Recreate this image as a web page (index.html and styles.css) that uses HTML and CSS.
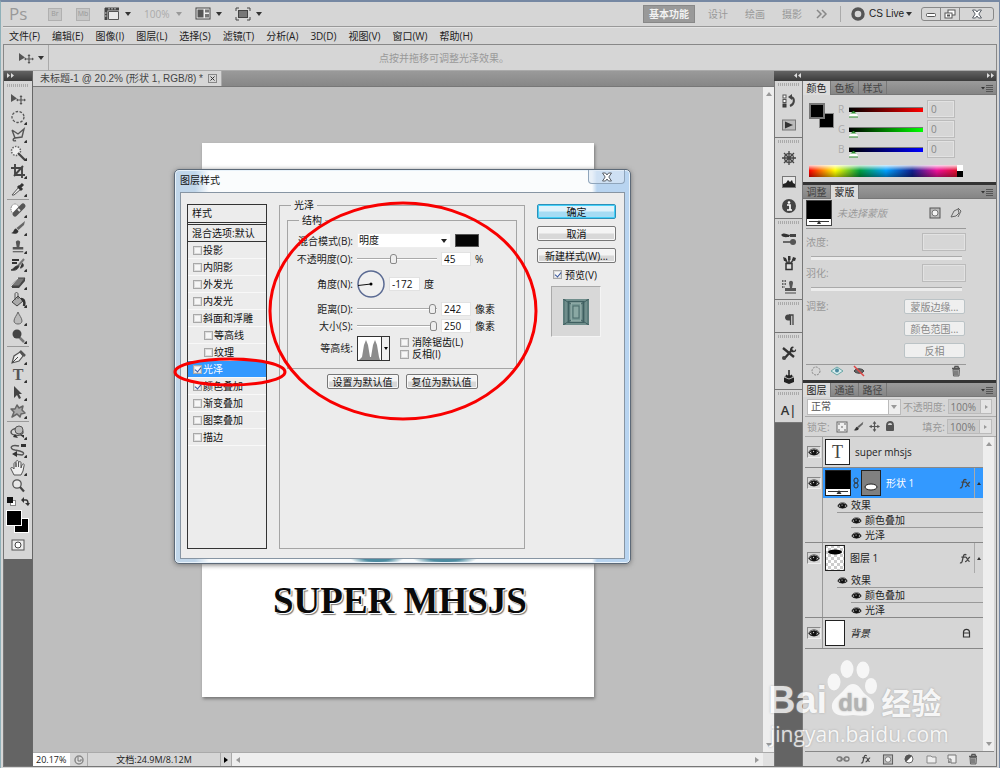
FILE: index.html
```html
<!DOCTYPE html>
<html lang="zh-CN">
<head>
<meta charset="utf-8">
<title>未标题-1 - Photoshop</title>
<link rel="stylesheet" href="styles.css">
</head>
<body>
<svg class="defs" aria-hidden="true">
  <symbol id="eye" viewBox="0 0 12 10"><path d="M1 5.500C3 2.500 9 2.500 11 5.500C9 8.500 3 8.500 1 5.500Z" fill="#eee" stroke="#222" stroke-width="1.300"/><circle cx="6" cy="5.300" r="2.800" fill="#111"/><path d="M1 4.500C3 1 9 1 11 4.500" fill="none" stroke="#555"/><circle cx="5.500" cy="4.500" r=".7" fill="#ccc"/></symbol>
  <symbol id="trash" viewBox="0 0 12 12"><path d="M2 3.500H10M4.500 3L5 1.500H8L8.500 3" fill="none" stroke="#555" stroke-width="1.300"/><path d="M3 4.500H9.500L9 11H3.500Z" fill="#aaa" stroke="#666"/><path d="M5 5.500V10M7 5.500V10" stroke="#555"/></symbol>
  <symbol id="mask" viewBox="0 0 12 12"><rect x="1" y="1" width="10" height="10" fill="#bbb" stroke="#555"/><circle cx="6" cy="6" r="3" fill="#f4f4f4" stroke="#777"/></symbol>
  <symbol id="menu" viewBox="0 0 12 8"><path d="M0 3H4L2 5.500Z" fill="#333"/><path d="M5 1.500H12M5 3.500H12M5 5.500H12M5 7.500H12" stroke="#555"/></symbol>
  <symbol id="move" viewBox="0 0 18 18"><path d="M2 4V12L8 8.500Z" fill="#555"/><path d="M12 6V14M8 10H16" stroke="#555" stroke-width="1.200"/><path d="M12 5L10.500 7H13.500ZM12 15L10.500 13H13.500ZM7 10L9 8.500V11.500ZM17 10L15 8.500V11.500Z" fill="#555"/></symbol>
  <symbol id="close" viewBox="0 0 12 10"><path d="M1.500 1H4.500L6 3L7.500 1H10.500L7.800 5L10.500 9H7.500L6 7L4.500 9H1.500L4.200 5Z" fill="#fff" stroke="#5a6068"/></symbol>
  <symbol id="brush" viewBox="0 0 16 16"><path d="M15 1L14 5L8.500 10L6.500 8Z" fill="#666"/><path d="M1 13C4 13 3 9 6 8.500L8.500 11C8 14 4 14.500 1 13Z" fill="#333"/></symbol>
  <symbol id="stamp" viewBox="0 0 16 16"><path d="M5.500 3.500C5.500 1 10.500 1 10.500 3.500L9.500 9H14V12H2V9H6.500Z" fill="#555"/><path d="M2 14.500H14" stroke="#666" stroke-width="1.500"/></symbol>
  <symbol id="fx" viewBox="0 0 14 12"><path d="M1 10.500C3.500 12 3.500 8 4.300 5S5.500 1 8 2M2.500 4.500H7M7 4.500C9 4 9 9.500 11.500 9M12 4.500C10 4.500 9 9.500 6.500 9.500" fill="none" stroke="#444" stroke-width="1.400"/></symbol>
</svg>

<div class="app">
  <header class="appbar">
    <span class="ps">Ps</span>
    <button class="flat launch" disabled>Br</button>
    <button class="flat launch" disabled>Mb</button>
    <button class="flat drop" aria-label="查看额外内容"><svg width="16" height="14" viewBox="0 0 16 14"><path d="M4.500 4.500H14.500V12.500H4.500Z" fill="#e8e8e8" stroke="#555"/><path d="M1 2H15M2 1V13" stroke="#444" stroke-width="3"/><path d="M5 1V2.500M8 1V2.500M11 1V2.500M1 6H2.500M1 9H2.500" stroke="#ddd"/></svg></button>
    <button class="flat drop zoomlevel" disabled>100%</button>
    <button class="flat drop" aria-label="排列文档"><svg width="16" height="14" viewBox="0 0 16 14"><rect x="1" y="1" width="14" height="11" fill="#eee" stroke="#444"/><rect x="2.500" y="2.500" width="6" height="8" fill="#555"/><rect x="10" y="2.500" width="4" height="3" fill="#777"/><rect x="10" y="7" width="4" height="3.500" fill="#777"/></svg></button>
    <button class="flat drop" aria-label="屏幕模式"><svg width="16" height="14" viewBox="0 0 16 14"><path d="M1 4V1H4M12 1H15V4M15 10V13H12M4 13H1V10" fill="none" stroke="#444"/><rect x="3.500" y="3.500" width="9" height="7" fill="#777" stroke="#444"/></svg></button>
    <nav class="workspaces" aria-label="工作区">
      <button class="flat current">基本功能</button>
      <button class="flat">设计</button>
      <button class="flat">绘画</button>
      <button class="flat">摄影</button>
      <button class="flat morews" aria-label="更多"><svg width="12" height="10" viewBox="0 0 12 10"><path d="M1 1L5 5L1 9M6 1L10 5L6 9" fill="none" stroke="#888" stroke-width="1.500"/></svg></button>
    </nav>
    <button class="flat cslive"><svg width="14" height="14" viewBox="0 0 14 14"><circle cx="7" cy="7" r="5" fill="none" stroke="#555" stroke-width="3.400"/></svg>CS Live</button>
    <div class="winbuttons">
      <button class="flat" aria-label="最小化"><svg width="12" height="10" viewBox="0 0 12 10"><rect x="1.500" y="4.500" width="9" height="3" rx="1" fill="#fff" stroke="#555"/></svg></button>
      <button class="flat" aria-label="还原"><svg width="12" height="10" viewBox="0 0 12 10"><rect x="4" y="1" width="7" height="5" fill="#fff" stroke="#555"/><rect x="1" y="4" width="7" height="5" fill="#fff" stroke="#555"/><rect x="3" y="5.500" width="3" height="2" fill="#555"/></svg></button>
      <button class="flat wide" aria-label="关闭"><svg width="12" height="10"><use href="#close"/></svg></button>
    </div>
  </header>

  <nav class="menubar" aria-label="主菜单">
    <button class="flat">文件(F)</button><button class="flat">编辑(E)</button><button class="flat">图像(I)</button><button class="flat">图层(L)</button><button class="flat">选择(S)</button><button class="flat">滤镜(T)</button><button class="flat">分析(A)</button><button class="flat">3D(D)</button><button class="flat">视图(V)</button><button class="flat">窗口(W)</button><button class="flat">帮助(H)</button>
  </nav>

  <div class="options">
    <button class="flat drop current-tool" aria-label="移动工具"><svg width="18" height="18"><use href="#move"/></svg></button>
    <p class="hint">点按并拖移可调整光泽效果。</p>
  </div>

  <div class="work">
    <aside class="toolcol">
      <div class="darkhead"><svg width="7" height="5" viewBox="0 0 7 5"><path d="M0 0L3 2.500L0 5ZM4 0L7 2.500L4 5Z" fill="#ddd"/></svg></div>
      <div class="tools">
        <div class="grip"></div>
        <button class="flat tool"><svg width="18" height="18"><use href="#move"/></svg></button>
        <button class="flat tool more"><svg width="18" height="18" viewBox="0 0 18 18"><ellipse cx="9" cy="9" rx="6" ry="5.500" fill="none" stroke="#555" stroke-width="1.300" stroke-dasharray="2.500 1.500"/></svg></button>
        <button class="flat tool more"><svg width="18" height="18" viewBox="0 0 18 18"><path d="M3 4L9 8L15 3L13 11L6 12C3 13 4 16 7 14.500M6 12L3 4" fill="none" stroke="#555" stroke-width="1.400"/></svg></button>
        <button class="flat tool more"><svg width="18" height="18" viewBox="0 0 18 18"><circle cx="7" cy="7" r="4.500" fill="#eee" stroke="#666" stroke-width="1.500" stroke-dasharray="1.500 1.300"/><path d="M9 9L16 16" stroke="#444" stroke-width="2.200"/></svg></button>
        <button class="flat tool more"><svg width="18" height="18" viewBox="0 0 18 18"><path d="M2 6H13V16M6 2V13H16M5 14L14 4" fill="none" stroke="#444" stroke-width="1.900"/></svg></button>
        <button class="flat tool more"><svg width="18" height="18" viewBox="0 0 18 18"><path d="M3 15L10 7L12 9L5 15Z" fill="#eee" stroke="#555"/><path d="M9 6L13 10M11 7L14 4" stroke="#333" stroke-width="3"/></svg></button>
        <hr>
        <button class="flat tool more"><svg width="18" height="18" viewBox="0 0 18 18"><ellipse cx="6" cy="8" rx="4" ry="5" fill="#fff" stroke="#777" stroke-dasharray="1.500 1"/><path d="M6 13L14 5" stroke="#555" stroke-width="5" stroke-linecap="round"/><path d="M9 8L11 10" stroke="#ddd" stroke-width="2"/></svg></button>
        <button class="flat tool more"><svg width="16" height="16"><use href="#brush"/></svg></button>
        <button class="flat tool more"><svg width="14" height="14"><use href="#stamp"/></svg></button>
        <button class="flat tool more"><svg width="18" height="18" viewBox="0 0 18 18"><path d="M3 5H10M3 8H8" stroke="#333" stroke-width="2"/><path d="M15 4L9 11" stroke="#777" stroke-width="2"/><path d="M2 15C5 14 6 10 10 11C9 15 5 16 2 15ZM11 13C15 13 15 9 13 8" fill="#333" stroke="#444"/></svg></button>
        <button class="flat tool more"><svg width="18" height="18" viewBox="0 0 18 18"><path d="M2 13L9 5H16L10 13Z" fill="#777" stroke="#444"/><path d="M2 13L9 5" stroke="#eee"/><path d="M10 13L16 5V8L10 15H3V13Z" fill="#444"/></svg></button>
        <button class="flat tool more"><svg width="18" height="18" viewBox="0 0 18 18"><path d="M3 11L9 5L14 10L8 15Z" fill="#aaa" stroke="#444"/><path d="M6 9V3C6 1 9 1 9 3V8" fill="none" stroke="#555"/><path d="M12 8C15 8 16 11 15 15" fill="none" stroke="#333" stroke-width="2.500"/></svg></button>
        <button class="flat tool more"><svg width="18" height="18" viewBox="0 0 18 18"><path d="M9 3C10 6 13 9 13 12C13 16 5 16 5 12C5 9 8 6 9 3Z" fill="#bbb" stroke="#666"/></svg></button>
        <button class="flat tool more"><svg width="18" height="18" viewBox="0 0 18 18"><path d="M10 10L15 15" stroke="#777" stroke-width="2.500"/><circle cx="8" cy="7" r="4.500" fill="#444"/></svg></button>
        <hr>
        <button class="flat tool more"><svg width="18" height="18" viewBox="0 0 18 18"><path d="M3 15L5 8L11 4L14 8L10 13Z" fill="#eee" stroke="#555" stroke-width="1.200"/><path d="M3 15L9 9" stroke="#444"/><path d="M11 3L16 8" stroke="#555" stroke-width="2.500"/></svg></button>
        <button class="flat tool more type">T</button>
        <button class="flat tool more"><svg width="18" height="18" viewBox="0 0 18 18"><path d="M5 2V14L8 11L10 15L12 14L10 10H13Z" fill="#444"/></svg></button>
        <button class="flat tool more"><svg width="18" height="18" viewBox="0 0 18 18"><path d="M8 3L10 6L14 4L13 8L16 11L12 12L11 15L8 12L3 15L5 10L2 7L6 7Z" fill="#aaa" stroke="#666" stroke-width="1.500" stroke-linejoin="round"/></svg></button>
        <hr>
        <button class="flat tool more"><svg width="18" height="18" viewBox="0 0 18 18"><ellipse cx="8" cy="9" rx="6" ry="3.500" fill="none" stroke="#555" stroke-width="1.500"/><circle cx="10" cy="7" r="4" fill="#bbb" stroke="#555"/><path d="M6 11L9 15L4 14ZM11 12H15V15Z" fill="#333"/></svg></button>
        <button class="flat tool more"><svg width="18" height="18" viewBox="0 0 18 18"><path d="M10 5C1 3 0 8 6 9C13 10 17 12 13 14L5 13" fill="none" stroke="#555" stroke-width="1.400"/><path d="M12 3H17V6H12ZM3 13L8 10V16Z" fill="#333"/></svg></button>
        <button class="flat tool more"><svg width="18" height="18" viewBox="0 0 18 18"><path d="M5 16L2 10C1 8 4 8 5 10V5C5 3 7 3 7 5V8V3C7 1 9.500 1 9.500 3V8V4C10 2 12 2 12 4V9L13 6C14 4 16 5 15 7L14 12L12 16Z" fill="#eee" stroke="#555"/></svg></button>
        <button class="flat tool"><svg width="18" height="18" viewBox="0 0 18 18"><circle cx="8" cy="7" r="4.200" fill="#e8e8e8" stroke="#555" stroke-width="1.300"/><path d="M11 10L15 14.500" stroke="#444" stroke-width="2.200"/></svg></button>
        <div class="minis">
          <svg width="9" height="9" viewBox="0 0 9 9"><rect x="3.500" y="3.500" width="5" height="5" fill="#fff" stroke="#888"/><rect width="6" height="6" fill="#111"/></svg>
          <svg width="9" height="9" viewBox="0 0 9 9"><path d="M2 3H5C7 3 7 5 7 7" fill="none" stroke="#333" stroke-width="1.500"/><path d="M0 3L3 0V6ZM4 6H9L7 9Z" fill="#333"/></svg>
        </div>
        <svg class="swatches" width="24" height="24" viewBox="0 0 24 24"><rect x="8.500" y="8.500" width="14" height="14" stroke="#fff"/><rect x=".5" y=".5" width="15" height="15" stroke="#fff"/></svg>
        <button class="flat tool quick"><svg width="14" height="12" viewBox="0 0 14 12"><rect x="1" y="1" width="12" height="10" fill="#eee" stroke="#555"/><circle cx="7" cy="6" r="3" fill="#fff" stroke="#444"/></svg></button>
      </div>
    </aside>

    <main class="docarea">
      <div class="doctabs">
        <div class="doctab">未标题-1 @ 20.2% (形状 1, RGB/8) *<button class="flat tabclose" aria-label="关闭文档"><svg width="9" height="9" viewBox="0 0 9 9"><rect x=".5" y=".5" width="8" height="8" fill="none" stroke="#888"/><path d="M2.500 2.500L6.500 6.500M6.500 2.500L2.500 6.500" stroke="#333"/></svg></button></div>
      </div>
      <div class="stage">
        <div class="canvas"><div class="artboard"><h1>SUPER MHSJS</h1></div></div>
        <div class="vscroll"><i class="up"></i><i class="down"></i></div>
      </div>
      <footer class="status">
        <input class="zoombox" aria-label="缩放" value="20.17%">
        <span class="stat-icon"><svg width="10" height="10" viewBox="0 0 10 10"><circle cx="5" cy="5" r="4" fill="#ddd" stroke="#888" stroke-width="1.500"/><path d="M4 2V6H7V4" fill="none" stroke="#777"/></svg></span>
        <span class="docsize">文档:24.9M/8.12M</span>
        <button class="flat stat-arrow" aria-label="状态栏选项"><i class="right black"></i></button>
        <div class="hscroll"><i class="left"></i><i class="right"></i></div>
        <span class="corner"></span>
      </footer>
    </main>

    <aside class="dock">
      <div class="darkhead dockhead"><svg width="7" height="5" viewBox="0 0 7 5"><path d="M3 0L0 2.500L3 5ZM7 0L4 2.500L7 5Z" fill="#ddd"/></svg><svg width="7" height="5" viewBox="0 0 7 5"><path d="M0 0L3 2.500L0 5ZM4 0L7 2.500L4 5Z" fill="#ddd"/></svg></div>
      <div class="dockbody">
        <div class="icons">
          <div class="igroup"><div class="grip"></div>
            <button class="flat"><svg width="16" height="16" viewBox="0 0 16 16"><rect x="2" y="2" width="3" height="3" fill="#fff" stroke="#555"/><rect x="2" y="6.500" width="3" height="3" fill="#fff" stroke="#555"/><rect x="2" y="11" width="3" height="3" fill="#444" stroke="#333"/><path d="M9 13C14 11 14 5 10 4" fill="none" stroke="#444" stroke-width="2"/><path d="M7 4L11 1V7Z" fill="#444"/></svg></button>
            <button class="flat"><svg width="16" height="16" viewBox="0 0 16 16"><rect x="1.500" y="3" width="13" height="10" fill="#bbb" stroke="#777"/><path d="M4 4.500L12 8L4 11.500Z" fill="#333"/></svg></button></div>
          <div class="igroup"><div class="grip"></div>
            <button class="flat"><svg width="16" height="16" viewBox="0 0 16 16"><circle cx="8" cy="8" r="4.500" fill="none" stroke="#555" stroke-width="1.500"/><path d="M8 1V15M1 8H15M3 3L13 13M13 3L3 13" stroke="#444" stroke-width="1.300"/></svg></button>
            <button class="flat"><svg width="16" height="16" viewBox="0 0 16 16"><rect x="1.500" y="2.500" width="13" height="11" fill="#e8e8e8" stroke="#777"/><path d="M2 13V10L5 9L7 6L9 8L11 6L12 9L14 10V13Z" fill="#222"/></svg></button>
            <button class="flat"><svg width="16" height="16" viewBox="0 0 16 16"><circle cx="8" cy="8" r="7" fill="#444"/><circle cx="8" cy="4.500" r="1.300" fill="#fff"/><path d="M6 7H9V12M6 12H11" stroke="#fff" stroke-width="1.700" fill="none"/></svg></button></div>
          <div class="igroup"><div class="grip"></div>
            <button class="flat"><svg width="16" height="16" viewBox="0 0 16 16"><path d="M1 4.500H14M2 11H15" stroke="#444" stroke-width="1.500"/><path d="M0 4C3 1 5 3 8 4V6C5 6 3 7 0 4Z" fill="#333"/><ellipse cx="12" cy="11" rx="3" ry="3" fill="#555"/><path d="M9 3H15V6H9Z" fill="#444"/></svg></button>
            <button class="flat"><svg width="16" height="16" viewBox="0 0 16 16"><path d="M7 9L4 4M8 9V2M9 9L13 4" stroke="#444" stroke-width="1.700"/><path d="M2 2L5 3L6 6L3 6ZM11 5L12 2L15 3L14 6ZM7 1H9.500V5H7Z" fill="#333"/><rect x="5" y="8.500" width="6" height="6" fill="#ddd" stroke="#333" stroke-width="1.500"/></svg></button>
            <button class="flat"><svg width="16" height="16" viewBox="0 0 16 16"><path d="M1 2H6M1 5H6M1 8H4" stroke="#444" stroke-width="1.500" stroke-dasharray="1.500 1"/><path d="M8 4C8 1 12 1 12 4L11 9H15V12H4V9H9Z" fill="#555"/><path d="M4 14H15" stroke="#444"/></svg></button></div>
          <div class="igroup"><div class="grip"></div>
            <button class="flat"><svg width="16" height="16" viewBox="0 0 16 16"><path d="M8 3H12V13M9.500 3V13" fill="none" stroke="#444" stroke-width="1.300"/><path d="M9 2.500H7C3 2.500 3 8.500 7 8.500H9Z" fill="#444"/></svg></button></div>
          <div class="igroup"><div class="grip"></div>
            <button class="flat"><svg width="16" height="16" viewBox="0 0 16 16"><path d="M2 3L13 12M3 14L10 6" stroke="#333" stroke-width="2.300"/><path d="M9 4C10 1 12 1 13 2L11 4L13 6L15 4C16 8 11 8 9 6Z" fill="#333"/><circle cx="3" cy="13" r="2" fill="#444"/></svg></button>
            <button class="flat"><svg width="16" height="16" viewBox="0 0 16 16"><path d="M3 8L8 6L13 8V13L8 15L3 13Z" fill="#222"/><path d="M8 1V8M5 6L8 9L11 6" stroke="#222" stroke-width="1.500" fill="none"/><path d="M3 8L8 10L13 8" stroke="#bbb" fill="none"/></svg></button></div>
          <div class="igroup"><div class="grip"></div>
            <button class="flat charpanel">A|</button></div>
        </div>

        <div class="panels">
          <section class="panel">
            <div class="tabs"><button class="flat on">颜色</button><button class="flat">色板</button><button class="flat">样式</button><svg class="pmenu" width="12" height="8"><use href="#menu"/></svg></div>
            <div class="color">
              <svg width="26" height="26" viewBox="0 0 26 26"><rect x="10.500" y="10.500" width="14" height="14" stroke="#888"/><rect x="1" y="1" width="14" height="14" stroke="#777" stroke-width="2"/><rect x="2" y="2" width="12" height="12"/></svg>
              <div class="channels">
                <div class="channel"><label for="r">R</label><input id="r" class="chan red" type="range" max="255" value="0"><input class="num" aria-label="R 值" value="0"></div>
                <div class="channel"><label for="g">G</label><input id="g" class="chan green" type="range" max="255" value="0"><input class="num" aria-label="G 值" value="0"></div>
                <div class="channel"><label for="b">B</label><input id="b" class="chan blue" type="range" max="255" value="0"><input class="num" aria-label="B 值" value="0"></div>
              </div>
            </div>
            <div class="spectrum"><i></i></div>
          </section>

          <section class="panel masks">
            <div class="tabs"><button class="flat">调整</button><button class="flat on">蒙版</button><svg class="pmenu" width="12" height="8"><use href="#menu"/></svg></div>
            <div class="maskbody">
              <div class="maskhead"><svg width="26" height="26" viewBox="0 0 26 26"><rect x=".5" y=".5" width="25" height="25" stroke="#444"/><rect x="1" y="19" width="24" height="6" fill="#fff"/><path d="M3 21.500H23" stroke="#333"/><path d="M13 20L11 24H15Z" fill="#333"/></svg><em>未选择蒙版</em>
                <svg width="12" height="12"><use href="#mask"/></svg><svg width="12" height="12" viewBox="0 0 12 12"><path d="M1 10L4 4L8 2L9 6L6 9ZM8 1L11 4L8 10" fill="none" stroke="#666"/></svg></div>
              <div class="prop"><label for="density">浓度:</label><input id="density" disabled></div>
              <div class="groove"></div>
              <div class="prop"><label for="feather">羽化:</label><input id="feather" disabled></div>
              <div class="groove"></div>
              <div class="refine"><span>调整:</span><div><button disabled>蒙版边缘...</button><button disabled>颜色范围...</button><button disabled>反相</button></div></div>
              <div class="maskfoot"><svg width="12" height="12" viewBox="0 0 12 12"><circle cx="6" cy="6" r="4" fill="none" stroke="#888" stroke-dasharray="2 1"/></svg><svg width="14" height="12" viewBox="0 0 14 12"><path d="M1 6L7 2L13 6L7 10Z" fill="#d7ecec" stroke="#68a6a6"/><circle cx="7" cy="5.500" r="2" fill="#4a8aa0"/></svg><svg width="14" height="12" viewBox="0 0 14 12"><path d="M2 6C4 3 10 3 12 6C10 9 4 9 2 6Z" fill="#666" stroke="#444"/><path d="M2 1L12 11" stroke="#d44" stroke-width="1.500"/></svg><svg class="end" width="12" height="12"><use href="#trash"/></svg></div>
            </div>
          </section>

          <section class="panel layers">
            <div class="tabs"><button class="flat on">图层</button><button class="flat">通道</button><button class="flat">路径</button><svg class="pmenu" width="12" height="8"><use href="#menu"/></svg></div>
            <div class="lrow">
              <span class="selectwrap blend"><select aria-label="混合模式"><option>正常</option></select></span>
              <label for="op">不透明度:</label><span class="pct"><input id="op" value="100%"><i class="right"></i></span>
            </div>
            <div class="lrow"><span class="lock">锁定:</span>
              <svg width="12" height="12" viewBox="0 0 12 12"><rect x="1" y="1" width="10" height="10" fill="#eee" stroke="#666"/><path d="M2 2H4V4H2ZM8 2H10V4H8ZM5 5H7V7H5ZM2 8H4V10H2ZM8 8H10V10H8Z" fill="#aaa"/></svg>
              <svg width="11" height="11"><use href="#brush"/></svg>
              <svg width="11" height="11" viewBox="0 0 12 12"><path d="M6 1V11M1 6H11" stroke="#555" stroke-width="1.300"/><path d="M6 0L4 3H8ZM6 12L4 9H8ZM0 6L3 4V8ZM12 6L9 4V8Z" fill="#555"/></svg>
              <svg width="10" height="11" viewBox="0 0 10 11"><path d="M2 5V4C2 0 8 0 8 4V5" fill="none" stroke="#555" stroke-width="1.800"/><rect x="1" y="4" width="8" height="6" rx="1" fill="#555"/></svg>
              <label class="fill" for="fl">填充:</label><span class="pct"><input id="fl" value="100%"><i class="right"></i></span>
            </div>
            <div class="lbody">
              <ul class="llist">
                <li><div class="vis"><svg width="12" height="10"><use href="#eye"/></svg></div><div class="lay"><div class="lmain"><span class="tthumb">T</span><span class="name">super mhsjs</span></div></div></li>
                <li><div class="vis"><svg width="12" height="10"><use href="#eye"/></svg></div><div class="lay"><div class="lmain sel"><svg width="26" height="26" viewBox="0 0 26 26"><rect x=".5" y=".5" width="25" height="25" stroke="#222"/><rect x="1" y="19" width="24" height="6" fill="#fff"/><path d="M3 21.500H23" stroke="#333"/><path d="M14 20L11.500 24H16.500Z" fill="#333"/></svg><svg class="tight" width="6" height="12" viewBox="0 0 6 12"><rect x="1" y="1" width="4" height="5" rx="2" fill="none" stroke="#333"/><rect x="1" y="6" width="4" height="5" rx="2" fill="none" stroke="#333"/></svg><svg width="20" height="26" viewBox="0 0 20 26"><rect x=".5" y=".5" width="19" height="25" fill="#808080" stroke="#222"/><ellipse cx="10" cy="17" rx="6" ry="3" fill="#fff" stroke="#222"/></svg><span class="name">形状 1</span><svg class="end" width="13" height="11"><use href="#fx"/></svg><i class="fold"></i></div>
                  <div class="eff"><svg width="11" height="9"><use href="#eye"/></svg>效果</div><div class="eff sub"><svg width="11" height="9"><use href="#eye"/></svg>颜色叠加</div><div class="eff sub"><svg width="11" height="9"><use href="#eye"/></svg>光泽</div></div></li>
                <li><div class="vis"><svg width="12" height="10"><use href="#eye"/></svg></div><div class="lay"><div class="lmain"><svg width="20" height="26" viewBox="0 0 20 26"><defs><pattern id="checks" width="6" height="6" patternUnits="userSpaceOnUse"><rect width="6" height="6" fill="#fff"/><path d="M0 0H3V3H0ZM3 3H6V6H3Z" fill="#ccc"/></pattern></defs><rect x=".5" y=".5" width="19" height="25" fill="url(#checks)" stroke="#222"/><ellipse cx="10" cy="7" rx="7" ry="2.500"/></svg><span class="name">图层 1</span><svg class="end" width="13" height="11"><use href="#fx"/></svg><i class="fold"></i></div>
                  <div class="eff"><svg width="11" height="9"><use href="#eye"/></svg>效果</div><div class="eff sub"><svg width="11" height="9"><use href="#eye"/></svg>颜色叠加</div><div class="eff sub"><svg width="11" height="9"><use href="#eye"/></svg>光泽</div></div></li>
                <li><div class="vis"><svg width="12" height="10"><use href="#eye"/></svg></div><div class="lay"><div class="lmain"><span class="wthumb"></span><em class="name">背景</em><svg class="end lockicon" width="9" height="10" viewBox="0 0 9 10"><path d="M1.500 9V4C2 .5 7 .5 7.500 4V9Z" fill="#ddd" stroke="#333" stroke-width="1.200"/><path d="M1.500 5H7.500" stroke="#333"/></svg></div></div></li>
              </ul>
              <div class="vscroll"><i class="up"></i><i class="down"></i></div>
            </div>
            <div class="lfoot">
              <svg width="14" height="8" viewBox="0 0 14 8"><rect x="1" y="2" width="5" height="4" rx="2" fill="none" stroke="#777" stroke-width="1.300"/><rect x="8" y="2" width="5" height="4" rx="2" fill="none" stroke="#777" stroke-width="1.300"/><path d="M4 4H10" stroke="#777"/></svg>
              <svg width="12" height="10"><use href="#fx"/></svg>
              <svg width="12" height="11"><use href="#mask"/></svg>
              <svg width="12" height="12" viewBox="0 0 12 12"><circle cx="5" cy="6" r="4" fill="#fff" stroke="#666"/><path d="M2 9A4 4 0 0 1 8 3Z" fill="#555"/></svg>
              <svg width="11" height="10" viewBox="0 0 11 10"><path d="M1 2H5L6 3H10V9H1Z" fill="#eee" stroke="#888"/></svg>
              <svg width="10" height="10" viewBox="0 0 10 10"><path d="M1 1H9V9H4V5H1Z" fill="#eee" stroke="#777"/><path d="M1 5L4 9H1Z" fill="#888"/></svg>
              <svg width="12" height="12"><use href="#trash"/></svg>
            </div>
          </section>
        </div>
      </div>
    </aside>
  </div>
</div>

<div class="dialog" role="dialog" aria-labelledby="dlg-title">
  <div class="titlebar"><span id="dlg-title">图层样式</span><button class="flat dlgclose" aria-label="关闭"><svg width="12" height="10"><use href="#close"/></svg></button></div>
  <form class="dlgbody">
    <div class="stylelist">
      <div class="lhead">样式</div>
      <div class="lsub">混合选项:默认</div>
      <label><input type="checkbox">投影</label>
      <label><input type="checkbox">内阴影</label>
      <label><input type="checkbox">外发光</label>
      <label><input type="checkbox">内发光</label>
      <label><input type="checkbox">斜面和浮雕</label>
      <label class="in"><input type="checkbox">等高线</label>
      <label class="in"><input type="checkbox">纹理</label>
      <label class="picked"><input type="checkbox" checked>光泽</label>
      <label><input type="checkbox" checked>颜色叠加</label>
      <label><input type="checkbox">渐变叠加</label>
      <label><input type="checkbox">图案叠加</label>
      <label><input type="checkbox">描边</label>
    </div>
    <fieldset class="outer"><legend>光泽</legend>
      <fieldset class="inner"><legend>结构</legend>
        <div class="frow mode"><label for="mode">混合模式(B):</label><span class="selectwrap"><select id="mode"><option>明度</option></select></span><button type="button" class="flat chip" aria-label="效果颜色"></button></div>
        <div class="frow"><label for="opacity">不透明度(O):</label><input id="opacity" class="rng" type="range" value="45"><input aria-label="不透明度值" value="45"><span>%</span></div>
        <div class="frow angle"><label for="angle">角度(N):</label><svg width="28" height="28" viewBox="0 0 28 28"><circle cx="14" cy="14" r="13" fill="#f0f0f0" stroke="#5b6b93" stroke-width="1.500"/><path d="M1 15.500L14 14" stroke="#111"/><circle cx="14" cy="14" r="1.500"/></svg><input id="angle" value="-172"><span>度</span></div>
        <div class="frow"><label for="dist">距离(D):</label><input id="dist" class="rng" type="range" value="98"><input aria-label="距离值" value="242"><span>像素</span></div>
        <div class="frow"><label for="size">大小(S):</label><input id="size" class="rng" type="range" value="100"><input aria-label="大小值" value="250"><span>像素</span></div>
        <div class="frow contour"><label for="contour">等高线:</label><button type="button" id="contour" class="flat curve" aria-label="等高线"><svg width="23" height="23" viewBox="0 0 23 23"><rect width="23" height="23" fill="#fff"/><path d="M1 23L4 20L6 8L8 3L10 8L12 20L13 20L15 8L17 3L19 8L21 20L22 23Z" fill="#8c8c8c"/></svg><i class="down black"></i></button><div class="checks"><label><input type="checkbox">消除锯齿(L)</label><label><input type="checkbox">反相(I)</label></div></div>
      </fieldset>
      <div class="defaults"><button type="button">设置为默认值</button><button type="button">复位为默认值</button></div>
    </fieldset>
    <div class="actions">
      <button type="button" class="ok">确定</button>
      <button type="button">取消</button>
      <button type="button">新建样式(W)...</button>
      <label><input type="checkbox" checked>预览(V)</label>
      <div class="preview"><svg width="26" height="26" viewBox="0 0 26 26"><rect width="26" height="26" fill="#5c7c7b"/><rect x="3" y="1" width="20" height="24" fill="none" stroke="#84a09d"/><rect x="5.500" y="2.500" width="15" height="21" fill="none" stroke="#3f5f60"/><rect x="8" y="4" width="10" height="18" fill="#779894" stroke="#a0b8b4"/><rect x="10" y="7" width="6" height="12" fill="#8aa8a3" stroke="#4a6a6a"/><path d="M0 0L8 5M26 0L18 5M0 26L8 21M26 26L18 21" stroke="#3f5f60"/></svg></div>
    </div>
  </form>
</div>

<svg class="marks" width="370" height="230" viewBox="0 0 370 230" aria-hidden="true"><g fill="none" stroke="#f80000" stroke-width="3"><ellipse cx="233" cy="113" rx="133" ry="108"/><ellipse cx="60" cy="174" rx="55" ry="13"/></g></svg>

<div class="watermark">
  <div class="wm-top"><b>Bai</b><svg width="50" height="58" viewBox="0 0 50 58"><g fill="#fff"><ellipse cx="7" cy="23" rx="6.500" ry="8.500"/><ellipse cx="20" cy="10" rx="6.500" ry="9"/><ellipse cx="36" cy="11" rx="6.500" ry="8.500"/><ellipse cx="44" cy="27" rx="6" ry="8"/><path d="M26 25C32 25 34 31 38 35C43 39 48 42 47 49C45 58 36 57 26 56C16 57 7 58 5 49C4 42 9 39 14 34C18 31 20 25 26 25Z"/></g><text x="26" y="52" text-anchor="middle">du</text></svg><b class="cn">经验</b></div>
  <div class="wm-url">jingyan.baidu.com</div>
</div>
</body>
</html>
```
FILE: styles.css
```css
* { box-sizing: border-box; }
body { margin: 0; font: 10px/14px "Open Sans", "Noto Sans CJK SC", sans-serif; color: #222; background: #7688a3; }
button, input, select { font: inherit; color: inherit; margin: 0; padding: 0; border-radius: 0; }
svg { display: block; flex: none; }
i { display: block; flex: none; }
.defs { position: absolute; width: 0; height: 0; }
.flat { display: flex; align-items: center; justify-content: center; border: 0; background: none; white-space: nowrap; }

.app { display: flex; flex-direction: column; height: 100vh; min-height: 768px; background: #d6d6d6; border: solid; border-width: 2px 1px 0 1px; border-color: #7688a3 #7688a3 #7688a3 #8fb0b8; padding: 0 2px 1px 2px; }

.appbar { display: flex; align-items: center; flex: none; height: 25px; padding: 0 3px 0 6px; border-bottom: 1px solid #999; box-shadow: 0 1px #e4e4e4; }
.ps { font-size: 17px; color: #999; width: 39px; }
.launch { width: 14px; height: 13px; margin-right: 14px; font-size: 7px; color: #999; background: #c6c6c6; border: 1px solid #b0b0b0; }
.drop::after { content: ""; margin-left: 5px; border: 3px solid transparent; border-top: 4px solid #333; border-bottom: 0; }
.appbar .drop { margin-right: 13px; }
.zoomlevel { color: #aaa; }
.zoomlevel::after { border-top-color: #999; margin-left: 7px; }
.workspaces { display: flex; align-items: center; gap: 17px; margin-left: auto; height: 16px; padding-right: 12px; border-right: 1px solid #aaa; }
.workspaces button { color: #999; }
.workspaces .current { height: 18px; width: 52px; color: #f2f2f2; font-weight: bold; background: #999; border: 1px solid #888; margin-right: -4px; }
.workspaces .morews { margin-left: -3px; }
.cslive { gap: 4px; margin: 0 9px 0 10px; font-family: "Liberation Sans", sans-serif; }
.cslive::after { content: ""; margin-left: -2px; border: 3px solid transparent; border-top: 4px solid #333; border-bottom: 0; }
.winbuttons { display: flex; height: 14px; border: 1px solid #888; border-radius: 3px; }
.winbuttons button { width: 19px; border-right: 1px solid #888; }
.winbuttons .wide { width: 33px; border: 0; }

.menubar { display: flex; align-items: center; flex: none; gap: 12px; height: 17px; padding-left: 6px; }
.options { display: flex; flex: none; height: 27px; border: 1px solid #888; border-bottom-color: #aaa; }
.current-tool { width: 45px; padding-left: 8px; border-right: 1px solid #aaa; }
.current-tool::after { margin-left: 3px; }
.hint { flex: 1; margin: 0; padding-right: 157px; text-align: center; line-height: 26px; color: #999; }

.work { display: flex; flex: 1; min-height: 0; border-bottom: 1px solid #777; }
.darkhead { height: 10px; flex: none; background: linear-gradient(#636363, #3b3b3b); padding: 2px 3px; }
.toolcol { width: 30px; flex: none; display: flex; flex-direction: column; background: #646464; border-left: 1px solid #777; border-right: 1px solid #666; }
.tools { background: #d6d6d6; padding: 1px 3px 5px; display: flex; flex-direction: column; align-items: center; }
.grip { width: 22px; height: 3px; margin: 2px auto 3px; background: repeating-linear-gradient(90deg, #aaa 0 1px, transparent 1px 2px); }
.tool { width: 18px; height: 18px; position: relative; flex: none; }
.more::after { content: ""; position: absolute; right: 0; bottom: 1px; border: 2px solid transparent; border-right-color: #333; border-bottom-color: #333; border-width: 1px 2px 2px 1px; }
.tools hr { width: 22px; height: 1px; margin: 1px 0; border: 0; background: #999; flex: none; }
.type { font: bold 16px "Liberation Serif", serif; color: #555; }
.minis { display: flex; gap: 5px; padding: 2px 0 4px; }
.quick { margin-top: 2px; }

.docarea { flex: 1; min-width: 0; display: flex; flex-direction: column; }
.doctabs { height: 16px; flex: none; display: flex; background: linear-gradient(#9a9a9a, #878787); border-bottom: 1px solid #777; }
.doctab { display: flex; align-items: center; gap: 5px; padding: 0 4px 0 7px; background: #d6d6d6; color: #444; white-space: nowrap; border-right: 1px solid #aaa; font-family: "Liberation Sans", "Noto Sans CJK SC", sans-serif; }
.stage { flex: 1; display: flex; min-height: 0; }
.canvas { flex: 1; display: flex; align-items: center; justify-content: center; background: #bebebe; overflow: hidden; }
.artboard { width: 392px; height: 554px; background: #fff; box-shadow: 1px 2px 3px #777; display: flex; align-items: flex-end; justify-content: center; padding-bottom: 75px; flex: none; }
.artboard h1 { margin: 0; padding-left: 4px; font: bold 37px/42px "Liberation Serif", serif; color: #0a0a0a; text-shadow: 1px 1px #fff, 2px 2px 1px #777; white-space: nowrap; }
.vscroll { width: 11px; flex: none; background: #eee; display: flex; flex-direction: column; align-items: center; justify-content: space-between; padding: 5px 0; }
.up { border: 3px solid transparent; border-bottom: 4px solid #999; border-top: 0; }
.down { border: 3px solid transparent; border-top: 4px solid #999; border-bottom: 0; }
.left { border: 3px solid transparent; border-right: 4px solid #999; border-left: 0; }
.right { border: 3px solid transparent; border-left: 4px solid #999; border-right: 0; }
.right.black { border-left-color: #000; }
.down.black { border-width: 3px 2px 0; border-top-color: #000; }
.status { display: flex; height: 14px; flex: none; background: #d6d6d6; line-height: 13px; border-top: 1px solid #aaa; }
.zoombox { width: 37px; border: 0; background: #fff; padding-left: 3px; font-size: 9px; }
.stat-icon { width: 18px; display: flex; align-items: center; justify-content: center; border-right: 1px solid #aaa; }
.docsize { width: 133px; text-align: center; border-right: 1px solid #aaa; white-space: nowrap; font-size: 9px; }
.stat-arrow { width: 11px; border-right: 1px solid #aaa; }
.hscroll { flex: 1; background: #eee; display: flex; justify-content: space-between; align-items: center; padding: 0 4px; }
.corner { width: 11px; background: #e0e0e0; }

.dock { width: 223px; flex: none; display: flex; flex-direction: column; border-right: 1px solid #777; }
.dockhead { display: flex; justify-content: space-between; padding: 2px 2px 2px 20px; }
.dockbody { flex: 1; display: flex; min-height: 0; }
.icons { width: 29px; flex: none; background: #646464; border-right: 1px solid #777; border-left: 1px solid #777; }
.igroup { display: flow-root; background: #d6d6d6; border-bottom: 1px solid #777; }
.igroup button { width: 100%; height: 24px; }
.charpanel { font-size: 13px; color: #333; font-weight: 600; }
.panels { flex: 1; min-width: 0; display: flex; flex-direction: column; gap: 3px; background: #333; }
.panel { background: #d6d6d6; }
.tabs { display: flex; height: 14px; background: linear-gradient(#9b9b9b, #858585); border-bottom: 1px solid #777; }
.tabs button { width: 28px; color: #444; border-right: 1px solid #777; }
.tabs .on { background: #dcdcdc; height: 14px; color: #222; }
.pmenu { margin: 3px 3px 0 auto; }
.color { display: flex; padding: 5px 41px 7px 6px; gap: 3px; }
.color > svg { margin-top: 3px; }
.channels { flex: 1; min-width: 0; display: flex; flex-direction: column; gap: 2px; }
.channel { display: flex; align-items: center; height: 18px; }
.channel label { width: 11px; color: #aaa; }
.chan { appearance: none; flex: 1; min-width: 0; height: 14px; margin-right: 4px; background: none; border: 0; }
.chan::-webkit-slider-runnable-track { height: 5px; border: 1px solid #777; border-width: 1px 0 0; }
.red::-webkit-slider-runnable-track { background: linear-gradient(90deg, #000, #f00); }
.green::-webkit-slider-runnable-track { background: linear-gradient(90deg, #000, #0f0); }
.blue::-webkit-slider-runnable-track { background: linear-gradient(90deg, #000, #00f); }
.chan::-webkit-slider-thumb { appearance: none; width: 9px; height: 7px; margin-top: 3px; border: 0; background: linear-gradient(#2b8a2b 2px, #fff 3px 5px, #2b8a2b 6px); clip-path: polygon(50% 0, 100% 70%, 100% 100%, 0 100%, 0 70%); }
.num { width: 28px; height: 18px; border: 1px solid #bbb; outline: 1px solid #e2e2e2; outline-offset: -2px; background: #d6d6d6; padding-left: 3px; color: #888; flex: none; }
.spectrum { height: 12px; margin: 0 33px 5px 6px; display: flex; justify-content: flex-end; background: linear-gradient(rgba(255,255,255,.85), transparent 45%, rgba(0,0,0,.35)), linear-gradient(90deg, #f00, #ff0 17%, #00a040 33%, #00a0ff 50%, #102090 67%, #f0109a 83%, #e01010); }
.spectrum i { width: 6px; background: linear-gradient(#fff 50%, #000 50%); }

.maskbody { padding: 1px 30px 0 3px; color: #999; height: 181px; }
.maskhead { display: flex; align-items: center; gap: 5px; padding-bottom: 2px; border-bottom: 1px solid #999; }
.maskhead em { flex: 1; }
.maskhead svg + svg { margin: 0 4px; }
.prop { display: flex; justify-content: space-between; align-items: center; padding-top: 4px; }
.prop input { width: 44px; height: 18px; border: 1px solid #bbb; outline: 1px solid #e2e2e2; outline-offset: -2px; background: #d6d6d6; }
.groove { height: 4px; margin: 5px 4px 0 5px; border-top: 1px solid #aaa; background: #ececec; }
.refine { display: flex; justify-content: space-between; padding: 8px 1px 6px 0; }
.refine div { display: flex; flex-direction: column; gap: 7px; }
.refine button { width: 61px; height: 15px; line-height: 12px; border: 1px solid #bbc3c6; border-radius: 2px; background: #efefef; color: #888; }
.maskfoot { display: flex; gap: 8px; padding: 0 4px; border-top: 1px solid #999; }
.end { margin-left: auto; }

.layers { flex: 1; min-height: 0; display: flex; flex-direction: column; }
.lrow { display: flex; align-items: center; height: 20px; flex: none; margin-left: 2px; padding: 0 4px 0 2px; gap: 5px; border-bottom: 1px solid #aaa; color: #999; white-space: nowrap; }
.lrow label { margin-left: auto; }
.lock { margin-right: 1px; }
.selectwrap { position: relative; display: flex; }
.selectwrap::after { content: ""; position: absolute; right: 4px; top: 6px; border: 3px solid transparent; border-top: 4px solid #222; border-bottom: 0; pointer-events: none; }
.selectwrap select { appearance: none; width: 100%; height: 15px; line-height: 13px; padding-left: 1px; border: 1px solid #eee; background: #fff; }
.blend { width: 95px; margin-right: -3px; }
.selectwrap.blend select { color: #555; border-color: #bbb; height: 16px; padding-left: 3px; background: linear-gradient(90deg, #fff 80px, #bbb 80px 81px, #eee 81px); }
.blend::after { border-top-color: #999; }
.pct { display: flex; align-items: center; width: 45px; height: 15px; border: 1px solid #bbb; background: #e4e4e4; margin-left: -3px; }
.pct input { width: 32px; height: 13px; border: 0; border-right: 1px solid #bbb; background: #ccc; padding-left: 2px; color: #777; }
.pct i { margin-left: 4px; border-width: 2px; border-left-width: 3px; }
.lbody { flex: 1; min-height: 0; display: flex; margin: 0 2px; border-bottom: 1px solid #888; }
.llist { flex: 1; min-width: 0; margin: 0; padding: 0; list-style: none; }
.llist li { display: flex; border-bottom: 1px solid #888; }
.vis { width: 18px; border-right: 1px solid #999; flex: none; }
.vis svg { box-sizing: content-box; margin: 9px 2px 0; border: 1px solid #aaa; border-color: #888 #eee #eee #888; }
.lay { flex: 1; min-width: 0; }
.lmain { display: flex; align-items: center; height: 30px; padding-left: 2px; }
.sel { background: #3399ff; color: #fff; }
.tthumb { width: 25px; height: 26px; border: 1px solid #222; background: #fff; text-align: center; font: 18px/24px "Liberation Serif", serif; color: #444; }
.wthumb { width: 20px; height: 26px; border: 1px solid #222; background: #fff; }
.name { padding-left: 5px; }
.tight { margin: 0 2px; }
.lockicon { margin-right: 12px; }
.fold { width: 9px; height: 30px; margin-left: 2px; border-left: 1px solid #aaa; display: flex; align-items: center; justify-content: center; }
.fold::after { content: ""; border: 2px solid transparent; border-bottom: 3px solid #333; border-top: 0; }
.eff { display: flex; align-items: center; gap: 3px; height: 14px; margin-left: 14px; color: #222; }
.sub { height: 15px; padding-left: 14px; border-top: 1px solid #999; }
.sub + .sub { margin-left: 28px; padding-left: 0; }
.lfoot { display: flex; align-items: center; justify-content: flex-end; gap: 10px; height: 14px; padding-right: 17px; flex: none; }

.dialog { position: absolute; left: 174px; top: 169px; width: 457px; border: 1px solid #5d6a78; border-radius: 5px; padding: 0 5px 4px; box-shadow: inset 0 0 0 1px #e8f2fa, 0 1px 5px #777; background: radial-gradient(ellipse 28px 10px at 202px 386px, #4c8ba0 55%, transparent), radial-gradient(ellipse 34px 10px at 270px 386px, #4c8ba0 55%, transparent), linear-gradient(90deg, #c0d6ea 0 20px, #fafcfd 34px 417px, #b8d4f0 422px); color: #111; }
.titlebar { display: flex; justify-content: space-between; height: 22px; line-height: 21px; }
.dlgclose { width: 37px; height: 14px; border: 1px solid #8fa5bb; border-top: 0; border-radius: 0 0 4px 4px; background: rgba(220,232,245,.6); }
.dlgbody { margin: 0; display: grid; grid-template-columns: 80px minmax(0, 1fr) 79px; gap: 12px; padding: 11px 8px 9px 6px; background: #ececec; border: 1px solid #8795a3; }
.stylelist { height: 345px; border: 1px solid #333; }
.lhead { height: 18px; line-height: 17px; padding-left: 4px; border-bottom: 1px solid #333; margin-bottom: 1px; }
.lsub { height: 18px; line-height: 16px; padding-left: 4px; border: 1px solid #333; border-width: 1px 0; white-space: nowrap; }
.stylelist label { display: flex; align-items: center; gap: 1px; height: 17px; padding-left: 5px; border-bottom: 1px solid #f8f8f8; white-space: nowrap; }
.stylelist .in { padding-left: 16px; }
.stylelist .picked { background: #3399ff; color: #fff; }
input[type="checkbox"] { appearance: none; width: 9px; height: 9px; border: 1px solid #a8a8a8; background: #f6f6f6; flex: none; box-shadow: inset 0 0 0 1px #ddd; }
input[type="checkbox"]:checked::after { content: ""; display: block; width: 3px; height: 5px; margin: 0 auto; border: solid #34549c; border-width: 0 1px 1px 0; transform: rotate(40deg); }
fieldset { min-width: 0; margin: 0; border: 1px solid #a5a5a5; padding: 0; }
legend { padding: 0 3px; line-height: 10px; }
.outer { height: 349px; margin-top: -4px; padding: 0 7px; }
.outer > legend { margin-left: 4px; }
.inner { height: 154px; margin-top: 5px; padding: 6px 0 0 5px; }
.inner > legend { margin-left: 6px; }
.frow { display: grid; grid-template-columns: 60px 80px 30px 1fr; column-gap: 4px; align-items: center; height: 17px; white-space: nowrap; }
.frow > label { text-align: right; color: #222; }
.frow input:not([type]) { width: 100%; height: 14px; border: 1px solid #e2e2e2; background: #fff; padding-left: 2px; }
.mode { grid-template-columns: 60px 94px 24px; height: 19px; }
.chip { height: 13px; background: #050505; border: 1px solid #555; }
.angle { grid-template-columns: 60px 28px 31px 1fr; height: 33px; }
.contour { grid-template-columns: 60px 33px 1fr; height: 28px; }
.rng { appearance: none; width: 100%; height: 12px; background: none; }
.rng::-webkit-slider-runnable-track { height: 2px; border-top: 1px solid #aaa; background: #fff; }
.rng::-webkit-slider-thumb { appearance: none; width: 7px; height: 10px; margin-top: -5px; border: 1px solid #888; border-radius: 3px 3px 2px 2px; background: #eee; }
.curve { height: 25px; border: 1px solid #333; background: #f0f0f0; justify-content: flex-start; }
.curve i { margin: 0 auto; }
.curve svg { box-sizing: content-box; border-right: 1px solid #333; }
.checks { padding-left: 6px; }
.checks label { display: flex; align-items: center; gap: 3px; height: 12px; }
.defaults { display: flex; justify-content: center; gap: 7px; padding: 5px 0 0; }
.defaults button, .actions button { height: 15px; line-height: 12px; border: 1px solid #777; border-radius: 2px; background: linear-gradient(#f4f4f4 45%, #d8d8d8 55%); white-space: nowrap; box-shadow: inset 0 0 0 1px #f8f8f8; }
.defaults button { width: 72px; }
.actions { display: flex; flex-direction: column; gap: 7px; }
.actions .ok { border-color: #2e90b8; background: linear-gradient(#dff2fb 45%, #a6dcf4 55%); box-shadow: inset 0 0 0 1px #45d0f8; }
.actions label { display: flex; align-items: center; gap: 3px; height: 9px; padding-left: 16px; }
.preview { width: 50px; height: 51px; margin-left: 14px; display: flex; align-items: center; justify-content: center; background: #d8d8d8; border: 1px solid #aaa; border-color: #aaa #f4f4f4 #f4f4f4 #aaa; }

.marks { position: absolute; left: 170px; top: 198px; pointer-events: none; }
.watermark { position: absolute; left: 768px; top: 659px; color: #fff; opacity: .78; pointer-events: none; text-shadow: 0 0 2px #999; }
.wm-top { display: flex; align-items: flex-end; height: 58px; }
.wm-top b { font: bold 38px/34px "Liberation Sans", sans-serif; }
.wm-top text { font: bold 24px "Liberation Sans", sans-serif; fill: #aaa; }
.wm-top .cn { font: bold 30px/32px "Noto Sans CJK SC", sans-serif; padding-left: 4px; }
.wm-url { font: 21px/26px "Open Sans", sans-serif; padding: 4px 0 0 2px; }
```
